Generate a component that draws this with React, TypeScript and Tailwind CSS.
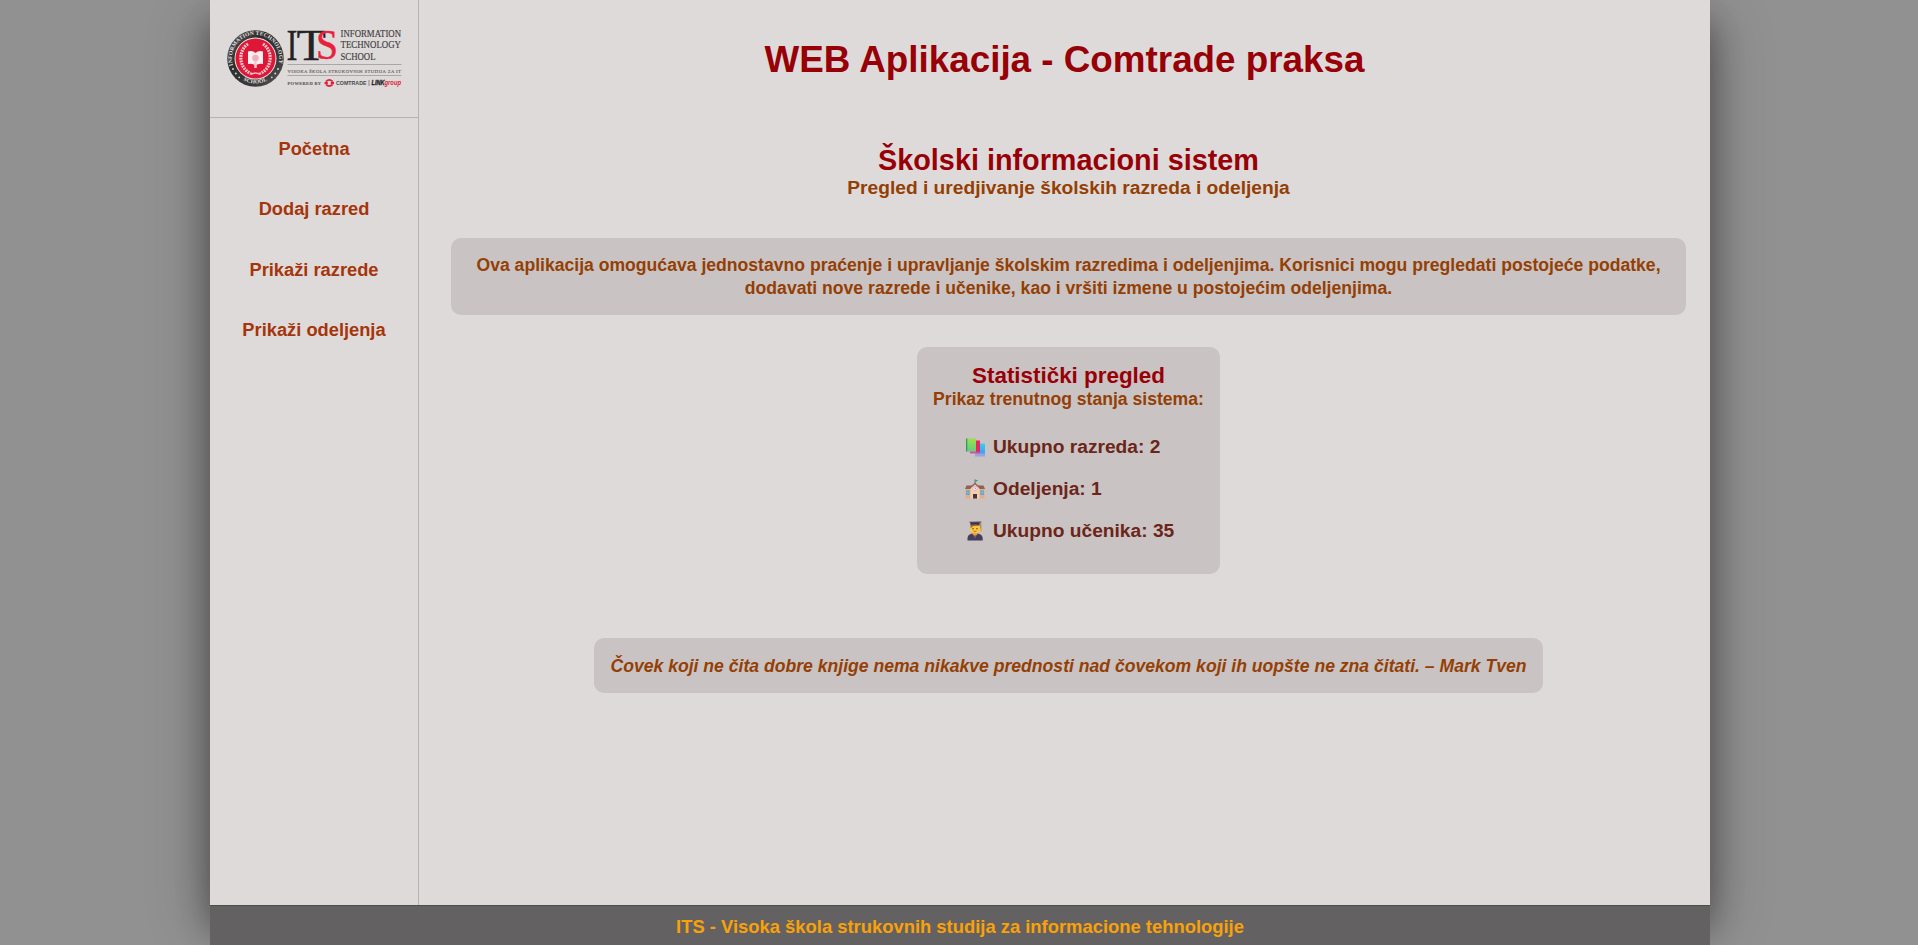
import React from "react";

function Seal() {
  return (
    <g>
      <defs>
        <linearGradient id="rim" x1="0" y1="0" x2="1" y2="1">
          <stop stopColor="#5a595a" />
          <stop offset="0.35" stopColor="#2f2e2f" />
          <stop offset="0.7" stopColor="#3a393a" />
          <stop offset="1" stopColor="#5a595a" />
        </linearGradient>
        <path id="arcTop" d="M6.6 37.2 A23.6 23.6 0 1 1 50.4 37.2" />
        <path id="arcBottom" d="M14.2 49 A25 25 0 0 0 42.8 49" />
      </defs>
      <circle cx="28.5" cy="28.5" r="28.3" fill="url(#rim)" />
      <circle cx="28.5" cy="28.5" r="21" fill="#e7e3e3" />
      <circle cx="28.5" cy="28.5" r="20" fill="#df1736" />
      <text fontSize="5.6" fontWeight="700" fill="#e2e0e0" fontFamily="Liberation Serif, serif">
        <textPath href="#arcTop" textLength="86" startOffset="2">INFORMATION TECHNOLOGY</textPath>
      </text>
      <text fontSize="5.6" fontWeight="700" fill="#e2e0e0" fontFamily="Liberation Serif, serif">
        <textPath href="#arcBottom" textLength="25" startOffset="2.5">SCHOOL</textPath>
      </text>
      <g fill="#d6d2d2">
        <circle cx="6" cy="39" r="1" /><circle cx="8.800" cy="43.500" r="1" /><circle cx="12.200" cy="47.300" r="0.900" />
        <circle cx="51" cy="39" r="1" /><circle cx="48.200" cy="43.500" r="1" /><circle cx="44.800" cy="47.300" r="0.900" />
      </g>
      <g stroke="#f3c9cf" strokeWidth="3.200" fill="none" strokeDasharray="1.800 0.900">
        <path d="M21 14 C11 20 11 38 24 43.500" />
        <path d="M36 14 C46 20 46 38 33 43.500" />
      </g>
      <path d="M24 43.500 Q28.500 42 33 44.500 M33 43.500 Q28.500 42 24 44.500" stroke="#f3c9cf" strokeWidth="1" fill="none" />
      <path d="M21 21.500 Q25.500 20 28.500 23 Q31.500 20 36 21.500 V34 Q31.500 33 28.500 35.500 Q25.500 33 21 34 Z" fill="#f8eeee" />
      <circle cx="28.500" cy="28" r="3.300" fill="#efb1b9" />
      <path d="M27.300 31 h2.400 v7 h-2.400 z" fill="#f3c9cf" />
    </g>
  );
}

function Logo() {
  return (
    <svg className="block overflow-visible font-normal" width="176" height="58" viewBox="0 0 176 58" role="img" aria-label="ITS">
      <Seal />
      <g fontFamily="Liberation Serif, serif">
        <g fill="#242224" stroke="#242224" strokeWidth="0.300" fontSize="44">
          <text x="59.500" y="29.500" textLength="11" lengthAdjust="spacingAndGlyphs">I</text>
          <text x="69.500" y="29.500" textLength="29.500" lengthAdjust="spacingAndGlyphs">T</text>
        </g>
        <text x="89" y="29.300" fontSize="42" fill="#e8203c" stroke="#e8203c" strokeWidth="0.500" textLength="22" lengthAdjust="spacingAndGlyphs">S</text>
        <g fontSize="9.300" fill="#3f3d3f" stroke="#3f3d3f" strokeWidth="0.150">
          <text x="113.500" y="6.900" textLength="60.500" lengthAdjust="spacingAndGlyphs">INFORMATION</text>
          <text x="113.500" y="18.400" textLength="60.500" lengthAdjust="spacingAndGlyphs">TECHNOLOGY</text>
          <text x="113.500" y="30" textLength="35" lengthAdjust="spacingAndGlyphs">SCHOOL</text>
        </g>
        <g fontSize="4.800" fill="#5a585a" stroke="#5a585a" strokeWidth="0.100">
          <text x="60.500" y="43" textLength="113.500">VISOKA ŠKOLA STRUKOVNIH STUDIJA ZA IT</text>
          <text x="60.500" y="54.800" fontSize="4.500" fontWeight="700" textLength="33.500">POWERED BY</text>
        </g>
      </g>
      <path d="M60.500 34.500 H174.500 M60.500 45.500 H174.500" stroke="#aaa7a7" strokeWidth="1" />
      <path d="M99 51.300 Q102.300 48.600 105.600 51.300 M99 54.700 Q102.300 57.400 105.600 54.700" stroke="#e01f36" strokeWidth="1.700" fill="none" />
      <path d="M97.600 53 h3.200 M103.800 53 h3.200" stroke="#e01f36" strokeWidth="2.400" />
      <g fontFamily="Liberation Sans, sans-serif" fontWeight="700">
        <text x="109" y="55" fontSize="5.200" fill="#4a484a" textLength="30.500" lengthAdjust="spacingAndGlyphs">COMTRADE</text>
        <path d="M142 50 V56" stroke="#777" strokeWidth="0.800" />
        <text x="144.500" y="55.200" fontSize="6.600" fontStyle="italic" fill="#1d1b1d" stroke="#1d1b1d" strokeWidth="0.300" textLength="13" lengthAdjust="spacingAndGlyphs">LINK</text>
        <text x="157.500" y="55.200" fontSize="6.600" fontStyle="italic" fill="#df2038" textLength="16.500" lengthAdjust="spacingAndGlyphs">group</text>
      </g>
    </svg>
  );
}

function BooksIcon() {
  return (
    <svg className="block" width="20" height="20" viewBox="0 0 20 20">
      <defs>
        <linearGradient id="green" x1="0" y1="0" x2="0" y2="1"><stop stopColor="#9de04b" /><stop offset="1" stopColor="#62cd83" /></linearGradient>
        <linearGradient id="blue" x1="0" y1="0" x2="0" y2="1"><stop stopColor="#35d0f0" /><stop offset="1" stopColor="#3d9df3" /></linearGradient>
      </defs>
      <path d="M10 6.500 H20 V17 H11 z" fill="url(#blue)" />
      <path d="M10 16.500 H20 V19.500 H10 z" fill="#9aa2df" />
      <path d="M5 3.500 H15 V15 H5 z" fill="#ea2460" />
      <path d="M5 14.800 H15 V16.500 H5 z" fill="#b66099" />
      <path d="M1 1.500 H11 V14.500 H1 z" fill="url(#green)" />
      <path d="M1 1.500 H2.300 V14.500 H1 z" fill="#299d5c" />
      <path d="M2 13 H11 V14.500 H2 z" fill="#8db6a0" />
    </svg>
  );
}

function SchoolIcon() {
  return (
    <svg className="block" width="20" height="20" viewBox="0 0 20 20">
      <path d="M10 0.500 V5" stroke="#667" strokeWidth="0.900" />
      <path d="M10.300 0.500 L13.300 1.500 L10.300 3 z" fill="#28a966" />
      <path d="M0.500 9 H19.500 V19.500 H0.500 z" fill="#e5ad87" />
      <path d="M1.500 6.500 H18.500 L20 10 H0 z" fill="#916057" />
      <path d="M5.500 8.500 L10 4.800 L14.500 8.500 V19.500 H5.500 z" fill="#f6cfaa" />
      <path d="M4.500 9.200 L10 4.500 L15.500 9.200" stroke="#8c5a52" strokeWidth="1.300" fill="none" />
      <circle cx="10" cy="9.500" r="2.200" fill="#f5f1fb" stroke="#ad9cc4" strokeWidth="0.600" />
      <path d="M10 8.400 V9.700 H11" stroke="#c43a62" strokeWidth="0.600" fill="none" />
      <path d="M8 15 H12 V19.500 H8 z" fill="#453244" />
      <path d="M1.300 11.500 h3.200 v4.500 h-3.200 z M15.500 11.500 h3.200 v4.500 h-3.200 z" fill="#35a5dd" />
      <path d="M2.900 11.500 v4.500 M1.300 13.700 h3.200 M17.100 11.500 v4.500 M15.500 13.700 h3.200" stroke="#b2cbd7" strokeWidth="0.500" />
    </svg>
  );
}

function StudentIcon() {
  return (
    <svg className="block" width="20" height="20" viewBox="0 0 20 20">
      <path d="M2.500 19.500 V17.500 Q2.500 13.500 7 12.500 H13 Q17.700 13.500 17.700 17.500 V19.500 z" fill="#463c5d" />
      <path d="M7.500 11.500 H12.500 V13.500 L10 15 L7.500 13.500 z" fill="#e8a02b" />
      <path d="M8.300 14 L10 15.500 L11.700 14 L10.500 17 H9.500 z" fill="#705aa0" />
      <path d="M5.500 3 H14.500 V8 Q14.500 12.300 10 12.300 Q5.500 12.300 5.500 8 z" fill="#fbc936" />
      <path d="M5.500 3 H14.500 V5 Q12 4.300 10 5 Q7.500 4.600 6.500 6.500 L5.500 7 z" fill="#9b6548" />
      <circle cx="8" cy="7.800" r="0.700" fill="#5b3330" /><circle cx="12" cy="7.800" r="0.700" fill="#5b3330" />
      <path d="M8.500 10 Q10 11 11.500 10" stroke="#c03f36" strokeWidth="0.800" fill="none" />
      <path d="M5.500 1.800 H14.500 V3.800 Q10 2.800 5.500 3.800 z" fill="#30283e" />
      <path d="M4 0.800 L16.500 0.500 L15 2.300 H5.500 z" fill="#51475f" />
      <path d="M15.800 1 V8" stroke="#8a6d4a" strokeWidth="0.800" />
      <path d="M15 7.500 h1.800 v3 h-1.800 z" fill="#e7ae35" />
    </svg>
  );
}

const links = ["Početna", "Dodaj razred", "Prikaži razrede", "Prikaži odeljenja"];

const stats = [
  { Icon: BooksIcon, text: "Ukupno razreda: 2" },
  { Icon: SchoolIcon, text: "Odeljenja: 1" },
  { Icon: StudentIcon, text: "Ukupno učenika: 35" },
];

export default function App() {
  return (
    <div className="flex h-[945px] justify-center overflow-hidden bg-[#919191] pl-0.5 font-['Liberation_Sans',Arial,sans-serif] font-bold">
      <div className="flex w-[1500px] flex-col">
        <div className="flex h-[905px] bg-[#dedad9] shadow-[0_20px_54px_rgba(0,0,0,0.35),0_24px_30px_rgba(0,0,0,0.3)]">
          <aside className="flex w-[209px] shrink-0 flex-col border-r border-[#b5b2b2]">
            <div className="h-[118px] shrink-0 border-b border-[#b5b2b2] pt-[30px] pl-[17px]">
              <Logo />
            </div>
            <nav className="flex flex-col items-center gap-[40.3px] pt-[21px] text-[18.3px] leading-5 text-[#a5350b]">
              {links.map((link) => (
                <a key={link} href="#">{link}</a>
              ))}
            </nav>
          </aside>
          <main className="flex grow flex-col items-center pl-2 text-[#943f05]">
            <h1 className="pt-[38px] pr-2 text-[36.8px] leading-[44px] text-[#980007]">WEB Aplikacija - Comtrade praksa</h1>
            <h2 className="mt-[62px] text-[28.8px] leading-[33px] text-[#980007]">Školski informacioni sistem</h2>
            <p className="text-[19.2px] leading-[22px]">Pregled i uredjivanje školskih razreda i odeljenja</p>
            <p className="mt-[39px] w-[1235px] rounded-[10px] bg-[#c9c3c3] px-4 pt-4 pb-[15px] text-center text-[17.6px] leading-[23px]">
              Ova aplikacija omogućava jednostavno praćenje i upravljanje školskim razredima i odeljenjima. Korisnici mogu pregledati postojeće podatke,
              dodavati nove razrede i učenike, kao i vršiti izmene u postojećim odeljenjima.
            </p>
            <section className="mt-8 flex h-[227px] w-[303px] flex-col items-center rounded-[10px] bg-[#c9c3c3] pt-4">
              <h3 className="text-[22.4px] leading-[26px] text-[#980007]">Statistički pregled</h3>
              <p className="text-[17.6px] leading-5">Prikaz trenutnog stanja sistema:</p>
              <ul className="flex w-full flex-col gap-5 pt-[27px] pl-12 text-[19.2px] leading-[22px] text-[#6c2519]">
                {stats.map(({ Icon, text }) => (
                  <li key={text} className="flex items-center gap-2">
                    <Icon />
                    <span>{text}</span>
                  </li>
                ))}
              </ul>
            </section>
            <p className="mt-16 h-[55px] w-[949px] rounded-[10px] bg-[#c9c3c3] pt-[18px] text-center text-[17.6px] leading-5 italic">
              Čovek koji ne čita dobre knjige nema nikakve prednosti nad čovekom koji ih uopšte ne zna čitati. – Mark Tven
            </p>
          </main>
        </div>
        <footer className="relative h-10 border-t border-[#504d4d] bg-[#646162] pt-[11px] text-center text-[18.4px] leading-5 text-[#f9a109]">
          ITS - Visoka škola strukovnih studija za informacione tehnologije
        </footer>
      </div>
    </div>
  );
}
